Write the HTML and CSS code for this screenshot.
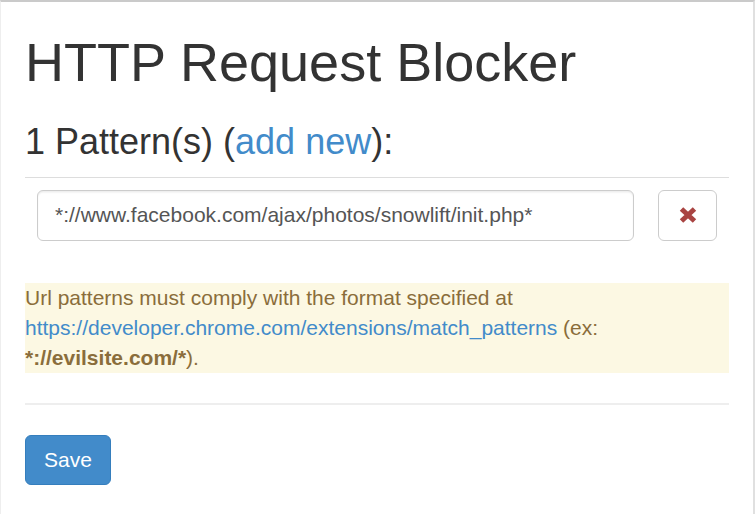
FILE: index.html
```html
<!DOCTYPE html>
<html lang="en">
<head>
    <meta charset="UTF-8">
    <meta name="viewport" content="width=device-width, initial-scale=1.0">
    <title>HTTP Request Blocker</title>
    <link rel="stylesheet" href="styles.css">
</head>
<body>
    <div id="container">
        <h1>HTTP Request Blocker</h1>
        <h3><span id="count">1</span> Pattern(s) (<a href="#" id="addNew">add new</a>):</h3>

        <table id="patterns">
            <tr>
                <td class="patternCell">
                    <input type="text" class="patternInput" value="*://www.facebook.com/ajax/photos/snowlift/init.php*">
                </td>
                <td class="removeCell">
                    <button class="removeButton" title="Remove">
                        <svg width="22" height="18" viewBox="0 0 22 18">
                            <path d="M4.5 3 L17.5 15 M17.5 3 L4.5 15" stroke="#a94442" stroke-width="5" stroke-linecap="butt"/>
                        </svg>
                    </button>
                </td>
            </tr>
        </table>

        <p class="note">
            Url patterns must comply with the format specified at
            <a href="#">https://developer.chrome.com/extensions/match_patterns</a> (ex:
            <strong>*://evilsite.com/*</strong>).
        </p>

        <hr>

        <button id="saveButton">Save</button>
    </div>
</body>
</html>
```

FILE: styles.css
```css
html, body {
    margin: 0;
    padding: 0;
}

body {
    font-family: 'Liberation Sans', Arial, sans-serif;
    font-size: 21px;
    line-height: 30px;
    color: #333;
    background: #fff;
    height: 514px;
    box-sizing: border-box;
    border-top: 2px solid #cacaca;
    border-left: 1px solid #eee;
    border-right: 2px solid #e0e0e0;
    overflow: hidden;
}

#container {
    padding: 1px 24px 0 24px;
}

a {
    color: #428bca;
    text-decoration: none;
}

h1 {
    font-size: 54px;
    font-weight: 400;
    line-height: 1.1;
    margin: 30px 0 15px;
}

h3 {
    font-size: 36px;
    font-weight: 400;
    line-height: 1.1;
    margin: 30px 0 15px;
}

#patterns {
    width: 100%;
    border-collapse: collapse;
    margin-bottom: 30px;
}

#patterns td {
    padding: 12px;
    border-top: 1px solid #ddd;
    vertical-align: top;
}

.patternInput {
    display: block;
    width: 100%;
    height: 51px;
    box-sizing: border-box;
    padding: 9px 17px;
    font-family: inherit;
    font-size: 21px;
    color: #555;
    border: 1.5px solid #ccc;
    border-radius: 6px;
    box-shadow: inset 0 1.5px 1.5px rgba(0, 0, 0, 0.075);
}

.removeCell {
    width: 1px;
}

.removeButton {
    display: flex;
    align-items: center;
    justify-content: center;
    width: 59px;
    height: 51px;
    padding: 0;
    background: #fff;
    border: 1.5px solid #ccc;
    border-radius: 6px;
    cursor: pointer;
}

.note {
    margin: 0 0 15px;
    color: #8a6d3b;
    background-color: #fcf8e3;
}

hr {
    margin: 30px 0;
    border: 0;
    border-top: 2px solid #eee;
}

#saveButton {
    font-family: inherit;
    font-size: 21px;
    line-height: 30px;
    padding: 9px 18px;
    color: #fff;
    background-color: #428bca;
    border: 1.5px solid #357ebd;
    border-radius: 6px;
    cursor: pointer;
}
```
